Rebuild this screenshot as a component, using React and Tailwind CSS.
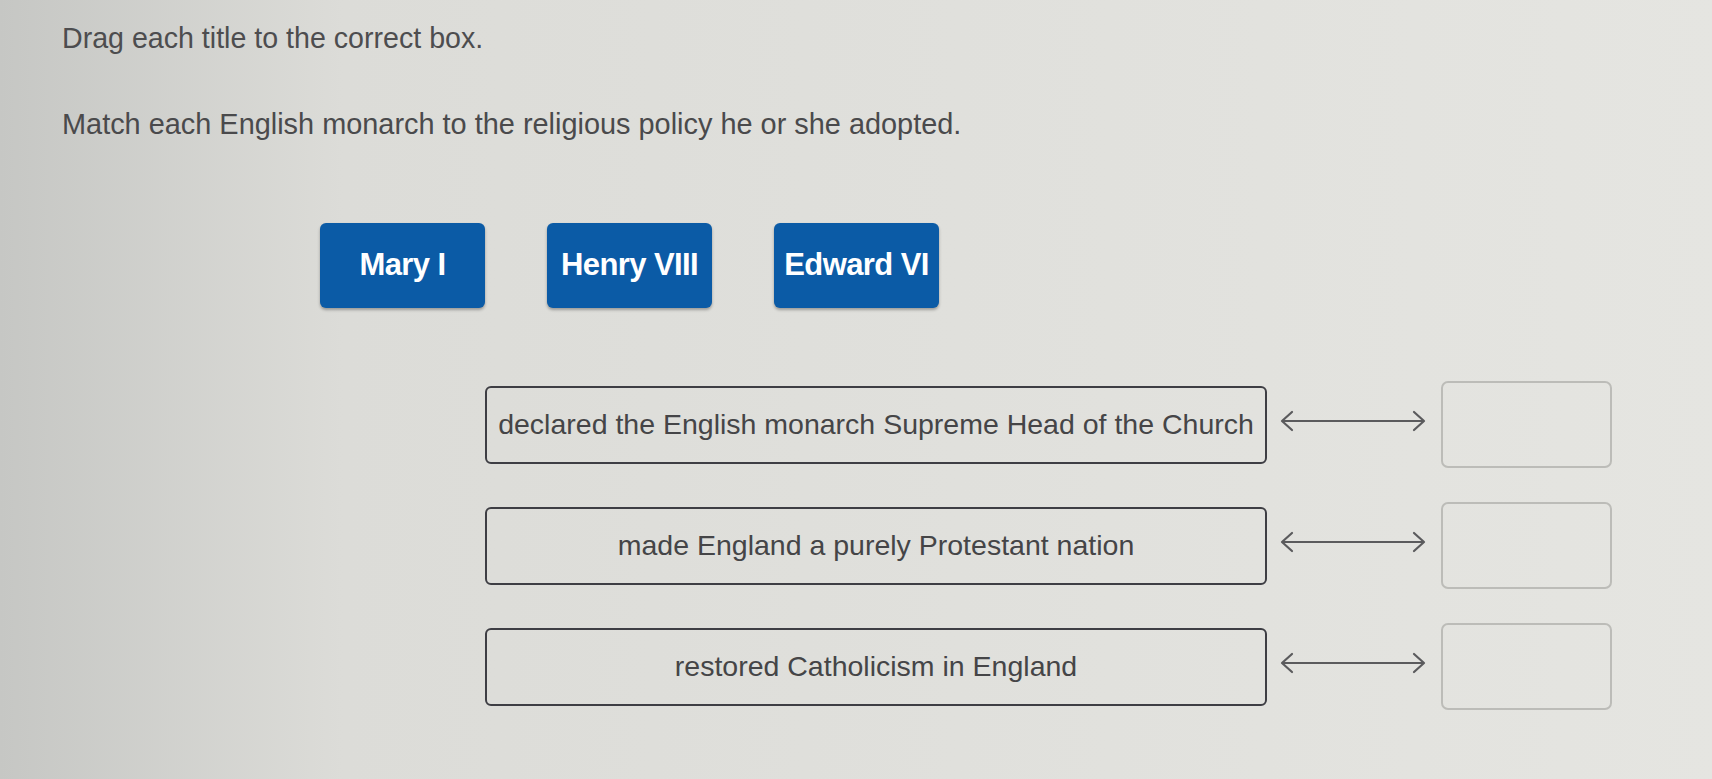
import React from 'react';

const monarchs = ['Mary I', 'Henry VIII', 'Edward VI'];

const policies = [
  'declared the English monarch Supreme Head of the Church',
  'made England a purely Protestant nation',
  'restored Catholicism in England',
];

// Double-headed connector between a policy and its drop box
const LinkArrow = () => (
  <svg width="148" height="24" viewBox="0 0 148 24" className="shrink-0 -mt-2">
    <line x1="3" y1="12" x2="145" y2="12" stroke="#5b5b5d" strokeWidth="2" />
    <path d="M13 3 L3 12 L13 21" fill="none" stroke="#5b5b5d" strokeWidth="2.2" strokeLinecap="round" strokeLinejoin="round" />
    <path d="M135 3 L145 12 L135 21" fill="none" stroke="#5b5b5d" strokeWidth="2.2" strokeLinecap="round" strokeLinejoin="round" />
  </svg>
);

const App = () => {
  return (
    <div className="min-h-screen w-full bg-linear-to-r from-[#c6c7c4] from-0% via-[#dcdcd8] via-20% to-[#e5e5e1] to-100% font-['Liberation_Sans',Arial,sans-serif] overflow-hidden">
      {/* Instructions */}
      <div className="pl-[62px] pt-[21px]">
        <p className="text-[28.6px] leading-[34px] text-[#4d4d4f]">Drag each title to the correct box.</p>
        <p className="mt-[52px] text-[28.9px] leading-[34px] text-[#4a4a4c]">
          Match each English monarch to the religious policy he or she adopted.
        </p>
      </div>

      {/* Draggable titles */}
      <div className="mt-[82px] pl-[320px] flex gap-[62px]">
        {monarchs.map((name) => (
          <button
            key={name}
            className="w-[165px] h-[85px] rounded-[6px] bg-[#0b5ba6] text-white text-[31px] font-bold tracking-[-0.6px] flex items-center justify-center shadow-[0_2px_3px_rgba(0,0,0,0.3)]"
          >
            {name}
          </button>
        ))}
      </div>

      {/* Policy rows with drop targets */}
      <div className="mt-[73px] pl-[485px] flex flex-col gap-[34px]">
        {policies.map((text) => (
          <div key={text} className="h-[87px] flex items-center">
            <div className="w-[782px] h-[78px] rounded-[6px] border-2 border-[#3e3e44] flex items-center justify-center">
              <span className="text-[28.5px] text-[#454547] whitespace-nowrap">{text}</span>
            </div>
            <div className="ml-[12px] mr-[14px]">
              <LinkArrow />
            </div>
            <div className="w-[171px] h-[87px] rounded-[7px] border-2 border-[#bcbcb8]"></div>
          </div>
        ))}
      </div>
    </div>
  );
};

export default App;
